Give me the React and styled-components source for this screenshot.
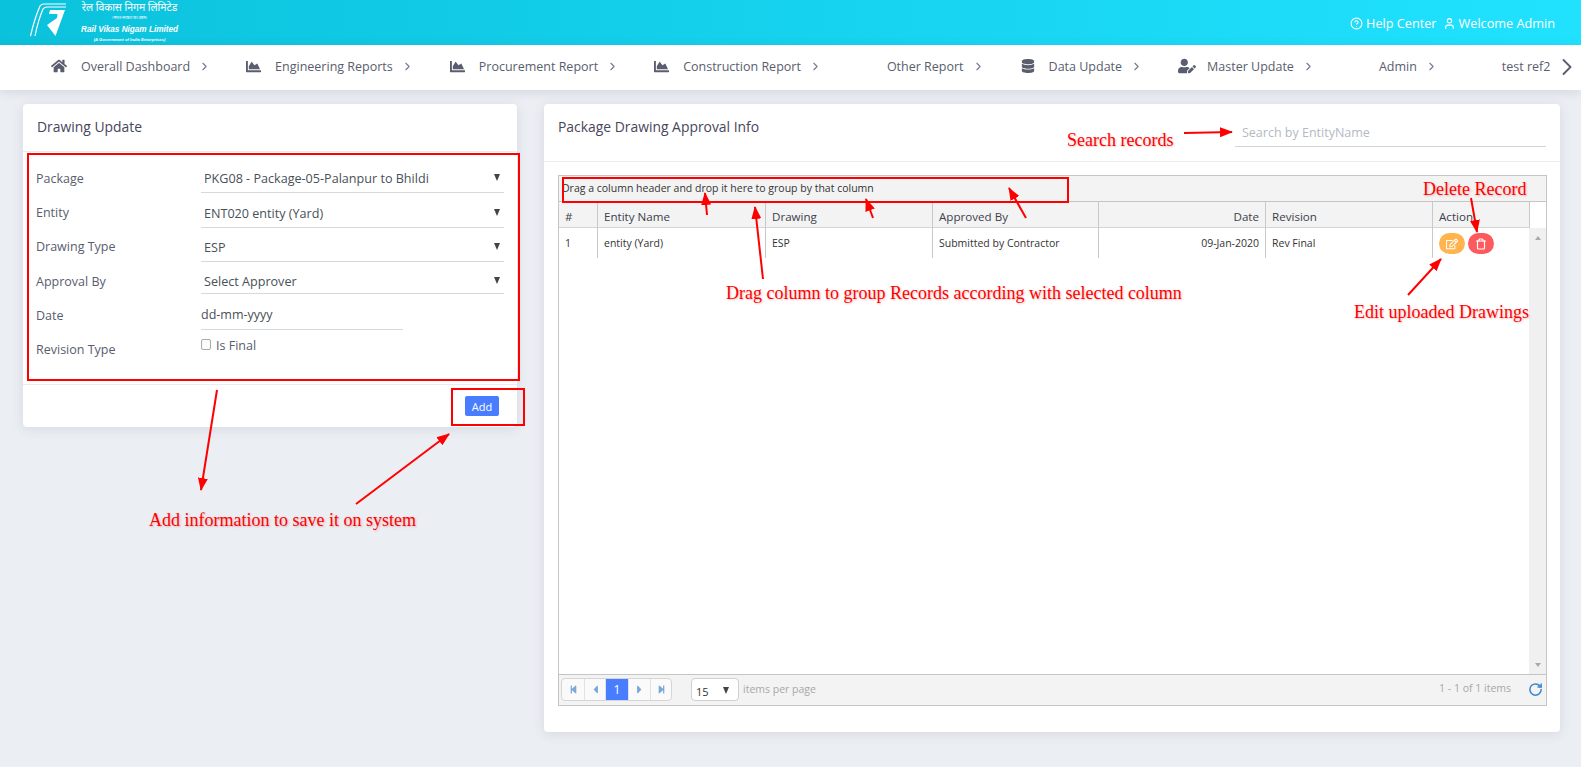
import React from "react";
import styled, { createGlobalStyle } from "styled-components";
import { FaHome, FaChartArea, FaDatabase, FaUserEdit, FaRegEdit, FaStepBackward, FaStepForward, FaCaretLeft, FaCaretRight } from "react-icons/fa";
import { ChevronRight, CircleHelp, User, Trash, RotateCw } from "lucide-react";

const Global = createGlobalStyle`
  html, body { margin: 0; padding: 0; height: 100%; overflow: hidden; }
  body { background: #ebeef3; font-family: "Open Sans", "Noto Sans", "Liberation Sans", sans-serif; color: #595d6e; }
  * { box-sizing: border-box; }
`;

const Page = styled.div`position: relative; width: 1581px; height: 767px; overflow: hidden;`;

const TopBar = styled.header`
  height: 45px; display: flex; align-items: flex-start; justify-content: space-between;
  background: linear-gradient(90deg, #0bc2dc 0%, #20e2ff 100%); padding-left: 30px;
`;
const Brand = styled.div`display: flex; gap: 15px; height: 45px;`;
const LogoText = styled.div`display: flex; flex-direction: column; align-items: center; width: 95px; color: #fff; padding-top: 1px;`;
const Hindi = styled.div`font: 10.4px/13px "Noto Sans", "Noto Sans CJK SC", sans-serif; white-space: nowrap;`;
const HindiSmall = styled.div`font-size: 4px; line-height: 7px; white-space: nowrap;`;
const Company = styled.div`font: italic 700 8.2px/12px "Liberation Sans", sans-serif; white-space: nowrap; margin-top: 3px;`;
const Govt = styled.div`font: italic 700 4.2px/8px "Liberation Sans", sans-serif; white-space: nowrap;`;
const TopLinks = styled.div`display: flex; gap: 6px; padding: 14px 26px 0 0; color: #fff; font-size: 12.7px; line-height: 18px;`;
const TopLink = styled.span`display: flex; align-items: center; gap: 3px;`;

const NavBar = styled.nav`
  position: relative; height: 45px; background: #fff; display: flex; align-items: center; padding: 0 0 3px 51px;
  box-shadow: 0 2px 10px rgba(82,63,105,.14); white-space: nowrap;
`;
const NavItem = styled.a`
  display: flex; align-items: center; font-size: 12.5px; color: #595d6e; margin-right: ${p => p.$gap}px;
  svg.ic { color: #595d6e; margin-right: ${p => p.$icGap || 14}px; }
  svg.ch { color: #74788d; margin-left: 8px; }
`;
const NavNext = styled.div`position: absolute; right: 0; top: 8px; color: #595d6e; display: flex;`;

const Main = styled.main`display: grid; grid-template-columns: 494px 1016px; column-gap: 27px; padding: 14px 0 0 23px; align-items: start;`;
const Card = styled.section`background: #fff; border-radius: 4px; box-shadow: 0 2px 12px rgba(82,63,105,.12);`;
const CardHead = styled.div`
  height: ${p => p.$h}px; border-bottom: 1px solid #ebedf2; padding: 14px 14px 0; display: flex; justify-content: space-between; align-items: flex-start;
`;
const CardTitle = styled.h3`margin: 0; font-size: 13.9px; line-height: 18px; font-weight: 500; color: #48465b;`;

const FormBody = styled.div`padding: 10px 13px 0 13px; height: 233px; border-bottom: 1px solid #ebedf2;`;
const Field = styled.div`display: grid; grid-template-columns: 165px 303px; height: ${p => p.$h || 34}px;`;
const Label = styled.label`font-size: 12.5px; line-height: 18px; color: #595d6e; padding-top: ${p => p.$pt ?? 7}px;`;
const SelectBox = styled.div`
  height: ${p => p.$h || 31}px; border-bottom: 1px solid #d5d8df; display: flex; align-items: center; justify-content: space-between;
  padding: ${p => p.$pt ?? 2}px 4px 0 3px; font-size: 12.6px; color: #495057;
`;
const Caret = styled.i`
  display: block; width: 0; height: 0; margin-top: -2px; border-left: 3px solid transparent; border-right: 3px solid transparent; border-top: 7px solid #444;
`;
const DateInput = styled.div`width: 202px; height: 31px; border-bottom: 1px solid #d5d8df; font-size: 12.5px; color: #495057; line-height: 32px;`;
const CheckRow = styled.div`display: flex; align-items: flex-start; gap: 5px; font-size: 12.5px; color: #595d6e; line-height: 18px; padding-top: 4px;`;
const Check = styled.span`width: 10px; height: 11px; margin-top: 2px; border: 1px solid #a9a9a9; border-radius: 2px; background: #fbfbfb;`;
const FormFoot = styled.div`height: 42px; display: flex; justify-content: flex-end; padding: 11px 18px 0 0;`;
const AddBtn = styled.button`
  width: 34px; height: 20px; padding: 0; border: 0; border-radius: 2px; background: #497dff; color: #fff; font: 500 11px "Open Sans", sans-serif;
`;

const Search = styled.div`
  width: 311px; height: 35px; margin: -6px 0 0; border-bottom: 1px solid #d2d5db; color: #b4b9c4; font-size: 12.5px; line-height: 18px; padding: 12px 0 0 7px;
`;
const CardBody = styled.div`padding: 13px 13px 26px 14px;`;
const Grid = styled.div`border: 1px solid #c5c5c5; height: 531px; display: flex; flex-direction: column; background: #fff;`;
const GroupBar = styled.div`
  height: 26px; flex: none; background: #f3f3f3; border-bottom: 1px solid #c5c5c5; font-size: 10.5px; color: #333; line-height: 24px; padding-left: 3px;
`;
const HeadRow = styled.div`display: grid; grid-template-columns: 38px 168px 167px 166px 167px 167px 97px 17px; height: 26px; flex: none; background: #f3f3f3; border-bottom: 1px solid #d5d5d5;`;
const HeadCell = styled.div`
  font-size: 11.6px; line-height: 29px; color: #3b3f4c; padding: 0 6px; text-align: ${p => p.$right ? "right" : "left"};
  border-left: ${p => p.$first ? "0" : "1px solid #c9c9c9"};
  ${p => p.$blank && "background:#fff;"}
`;
const Scroll = styled.div`flex: 1; display: grid; grid-template-columns: 1fr 17px; min-height: 0;`;
const Rows = styled.div``;
const Row = styled.div`display: grid; grid-template-columns: 38px 168px 167px 166px 167px 167px 97px; height: 30px;`;
const Cell = styled.div`
  font-size: 10.5px; line-height: 30px; color: #333; padding: 0 6px; 
  border-left: ${p => p.$first ? "0" : "1px solid #c9c9c9"}; display: flex; gap: 3px; justify-content: ${p => p.$right ? "flex-end" : "flex-start"};
`;
const Pill = styled.span`
  width: 26px; height: 21px; margin-top: 5px; border-radius: 11px; background: ${p => p.$c}; color: #fff; display: flex; align-items: center; justify-content: center;
`;
const Track = styled.div`background: #f0f0f0; display: flex; flex-direction: column; justify-content: space-between; align-items: center; padding: 8px 0 7px;`;
const TrackArrow = styled.i`
  display: block; width: 0; height: 0; border-left: 3.5px solid transparent; border-right: 3.5px solid transparent;
  ${p => p.$up ? "border-bottom: 4px solid #a9a9a9;" : "border-top: 4px solid #a9a9a9;"}
`;
const Pager = styled.div`height: 31px; flex: none; background: #f3f3f3; border-top: 1px solid #c5c5c5; display: flex; align-items: flex-start; padding: 3px 0 0 2px;`;
const PagerGroup = styled.div`display: flex; height: 23px; border: 1px solid #d5d5d5; border-radius: 4px; background: #fafafa; overflow: hidden;`;
const PageBtn = styled.span`
  width: ${p => p.$w || 22}px; display: flex; align-items: center; justify-content: center; font-size: 12px; color: ${p => p.$on ? "#fff" : "#7aa9d8"};
  background: ${p => p.$on ? "#497dff" : "transparent"}; border-left: ${p => p.$first ? "0" : "1px solid #e2e2e2"};
`;
const PageSize = styled.div`
  width: 48px; height: 23px; margin-left: 19px; border: 1px solid #d0d0d0; border-radius: 4px; background: #fff; display: flex; align-items: center; justify-content: space-between;
  padding: 3px 9px 0 4px; font-size: 11px; color: #333;
`;
const PagerNote = styled.span`margin-left: 4px; font-size: 10.5px; line-height: 22px; color: #a8a8a8;`;
const PagerInfo = styled.span`margin-left: auto; font-size: 10.5px; line-height: 21px; color: #a8a8a8;`;
const Refresh = styled.span`margin: 4px 3px 0 17px; color: #3f86cf; display: flex;`;

const Overlay = styled.svg`position: absolute; inset: 0; pointer-events: none;`;
const RedBox = styled.div`
  position: absolute; left: ${p => p.$x}px; top: ${p => p.$y}px; width: ${p => p.$w}px; height: ${p => p.$h}px; border: 2px solid #f00; pointer-events: none;
`;
const Note = styled.div`
  position: absolute; left: ${p => p.$x}px; top: ${p => p.$y}px; font: 18px/20px "Liberation Serif", serif; color: #f00; white-space: nowrap;
  text-shadow: 1px 1px 2px rgba(200,0,0,.25); pointer-events: none;
`;

const Logo = () => (
  <svg width="37" height="38" viewBox="0 0 37 38" fill="none" style={{ marginTop: 1 }}>
    <path d="M0.5 35 C3 24 7 12 10 5 C11 3.5 12 3 14 3 L36 3" stroke="#fff" strokeWidth="1.2" />
    <path d="M5 35 C7 25 10 15 13 8 C14 6.6 15 6 17 6 L36 6" stroke="#fff" strokeWidth="1.2" />
    <path d="M20 9 L35 9 L25.5 35 L17 24 L27 17 L27.5 13 L19 13 Z" fill="#fff" />
  </svg>
);

const arrows = [
  [217, 390, 201, 490], [356, 504, 449, 434], [1184, 133, 1232, 132],
  [707, 215, 705, 193], [873, 218, 866, 199], [1026, 218, 1009, 188], [763, 279, 755, 207],
  [1471, 198, 1477, 232], [1408, 295, 1441, 259],
];

const nav = [
  { t: "Overall Dashboard", I: FaHome, s: 16, gap: 35 },
  { t: "Engineering Reports", I: FaChartArea, s: 15, gap: 36 },
  { t: "Procurement Report", I: FaChartArea, s: 15, gap: 35 },
  { t: "Construction Report", I: FaChartArea, s: 15, gap: 65 },
  { t: "Other Report", gap: 36 },
  { t: "Data Update", I: FaDatabase, s: 14, gap: 35 },
  { t: "Master Update", I: FaUserEdit, s: 18, gap: 64, g: 11 },
  { t: "Admin", gap: 64 },
];

export default function App() {
  return (
    <Page>
      <Global />
      <TopBar>
        <Brand>
          <Logo />
          <LogoText>
            <Hindi>रेल विकास निगम लिमिटेड</Hindi>
            <HindiSmall>(भारत सरकार का उद्यम)</HindiSmall>
            <Company>Rail Vikas Nigam Limited</Company>
            <Govt>(A Government of India Enterprises)</Govt>
          </LogoText>
        </Brand>
        <TopLinks>
          <TopLink><CircleHelp size={13} />Help Center</TopLink>
          <TopLink><User size={13} />Welcome Admin</TopLink>
        </TopLinks>
      </TopBar>
      <NavBar>
        {nav.map(n => (
          <NavItem key={n.t} $gap={n.gap} $icGap={n.g}>
            {n.I && <n.I className="ic" size={n.s} />}
            {n.t}
            <ChevronRight className="ch" size={13} />
          </NavItem>
        ))}
        <NavItem $gap={0}>test ref2</NavItem>
        <NavNext><ChevronRight size={28} strokeWidth={1.6} /></NavNext>
      </NavBar>
      <Main>
        <Card>
          <CardHead $h={48}><CardTitle>Drawing Update</CardTitle></CardHead>
          <FormBody>
            <Field $h={35}><Label $pt={8}>Package</Label><SelectBox>PKG08 - Package-05-Palanpur to Bhildi<Caret /></SelectBox></Field>
            <Field><Label>Entity</Label><SelectBox>ENT020 entity (Yard)<Caret /></SelectBox></Field>
            <Field><Label>Drawing Type</Label><SelectBox>ESP<Caret /></SelectBox></Field>
            <Field><Label $pt={8}>Approval By</Label><SelectBox $h={29} $pt={5}>Select Approver<Caret /></SelectBox></Field>
            <Field><Label $pt={8}>Date</Label><DateInput>dd-mm-yyyy</DateInput></Field>
            <Field><Label $pt={8}>Revision Type</Label><CheckRow><Check />Is Final</CheckRow></Field>
          </FormBody>
          <FormFoot><AddBtn>Add</AddBtn></FormFoot>
        </Card>
        <Card>
          <CardHead $h={58}>
            <CardTitle>Package Drawing Approval Info</CardTitle>
            <Search>Search by EntityName</Search>
          </CardHead>
          <CardBody>
            <Grid>
              <GroupBar>Drag a column header and drop it here to group by that column</GroupBar>
              <HeadRow>
                <HeadCell $first>#</HeadCell>
                <HeadCell>Entity Name</HeadCell>
                <HeadCell>Drawing</HeadCell>
                <HeadCell>Approved By</HeadCell>
                <HeadCell $right>Date</HeadCell>
                <HeadCell>Revision</HeadCell>
                <HeadCell>Action</HeadCell>
                <HeadCell $blank />
              </HeadRow>
              <Scroll>
                <Rows>
                  <Row>
                    <Cell $first>1</Cell>
                    <Cell>entity (Yard)</Cell>
                    <Cell>ESP</Cell>
                    <Cell>Submitted by Contractor</Cell>
                    <Cell $right>09-Jan-2020</Cell>
                    <Cell>Rev Final</Cell>
                    <Cell>
                      <Pill $c="#ffb44f"><FaRegEdit size={12} /></Pill>
                      <Pill $c="#fd5a5e"><Trash size={12} strokeWidth={2.4} /></Pill>
                    </Cell>
                  </Row>
                </Rows>
                <Track><TrackArrow $up /><TrackArrow /></Track>
              </Scroll>
              <Pager>
                <PagerGroup>
                  <PageBtn $first $w={22}><FaStepBackward size={9} /></PageBtn>
                  <PageBtn $w={21}><FaCaretLeft size={13} /></PageBtn>
                  <PageBtn $on $w={23}>1</PageBtn>
                  <PageBtn $w={22}><FaCaretRight size={13} /></PageBtn>
                  <PageBtn $w={21}><FaStepForward size={9} /></PageBtn>
                </PagerGroup>
                <PageSize>15<Caret /></PageSize>
                <PagerNote>items per page</PagerNote>
                <PagerInfo>1 - 1 of 1 items</PagerInfo>
                <Refresh><RotateCw size={15} strokeWidth={2.4} /></Refresh>
              </Pager>
            </Grid>
          </CardBody>
        </Card>
      </Main>

      <RedBox $x={27} $y={153} $w={493} $h={228} />
      <RedBox $x={451} $y={388} $w={74} $h={38} />
      <RedBox $x={562} $y={177} $w={507} $h={26} />
      <Overlay width="1581" height="767" viewBox="0 0 1581 767">
        <defs>
          <marker id="head" markerUnits="userSpaceOnUse" markerWidth="13" markerHeight="10" refX="12" refY="5" orient="auto">
            <path d="M0 0 L13 5 L0 10 Z" fill="#f00" />
          </marker>
        </defs>
        {arrows.map(([a, b, c, d]) => (
          <line key={`${a}-${b}`} x1={a} y1={b} x2={c} y2={d} stroke="#f00" strokeWidth="2" markerEnd="url(#head)" />
        ))}
      </Overlay>
      <Note $x={149} $y={510}>Add information to save it on system</Note>
      <Note $x={1067} $y={130}>Search records</Note>
      <Note $x={726} $y={283}>Drag column to group Records according with selected column</Note>
      <Note $x={1423} $y={179}>Delete Record</Note>
      <Note $x={1354} $y={302}>Edit uploaded Drawings</Note>
    </Page>
  );
}
